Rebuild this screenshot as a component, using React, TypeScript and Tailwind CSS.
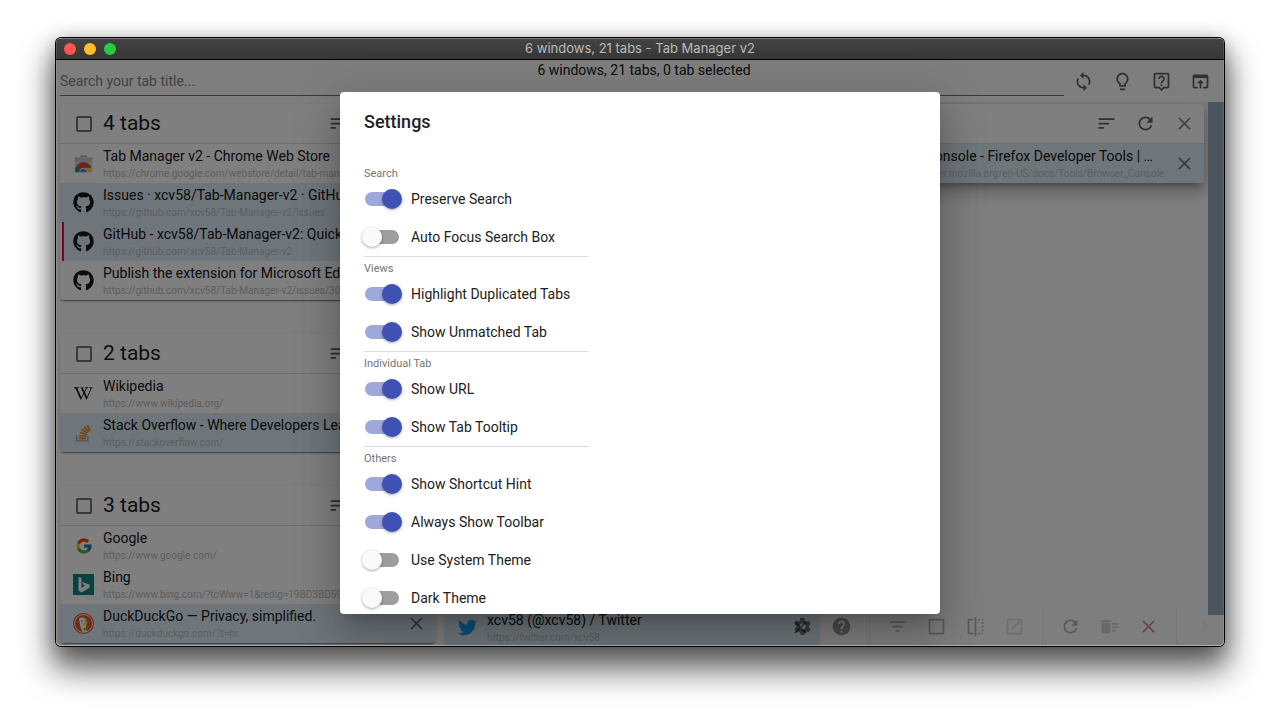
import { useState, type ReactNode } from "react";
import type { IconType } from "react-icons";
import {
  MdCheckBoxOutlineBlank,
  MdChevronRight,
  MdClose,
  MdDeleteSweep,
  MdFilterList,
  MdFlip,
  MdHelp,
  MdLightbulbOutline,
  MdOpenInBrowser,
  MdOpenInNew,
  MdOutlineLiveHelp,
  MdRefresh,
  MdSettings,
  MdSort,
  MdSync,
} from "react-icons/md";
import { FaGithub, FaTwitter, FaWikipediaW } from "react-icons/fa";
import { FcGoogle } from "react-icons/fc";

type Tab = {
  title: string;
  url: string;
  icon?: ReactNode;
  highlighted?: boolean;
  active?: boolean;
};

function ChromeStoreIcon() {
  return (
    <svg viewBox="0 0 24 24" className="size-[21px]" aria-hidden="true">
      <path d="M9 5V3.6h6V5" fill="none" stroke="#999" strokeWidth="1.4" />
      <path d="M2 5h20v15.500H2z" fill="#d4d4d4" />
      <path d="M2 5h20v5H2z" fill="#c6c6c6" />
      <path d="M2.500 22a9.500 9.500 0 0 1 1.800-7.500L9 22z" fill="#0f9d58" />
      <path d="M21.500 22a9.500 9.500 0 0 0-.8-5.500H13l2 5.500z" fill="#ffcd40" />
      <path d="M4 14.800a9.500 9.500 0 0 1 16.800 2H12a4.500 4.500 0 0 0-4.300 3z" fill="#db4437" />
      <path d="M7.300 22a4.700 4.700 0 0 1 9.400 0z" fill="#f1f1f1" />
      <path d="M8.300 22a3.700 3.700 0 0 1 7.400 0z" fill="#4285f4" />
    </svg>
  );
}

function StackOverflowIcon() {
  return (
    <svg viewBox="0 0 24 24" className="size-[21px]" aria-hidden="true" fill="none">
      <path d="M4 15.500v6h13v-6" stroke="#a6a6a6" strokeWidth="1.500" />
      <g stroke="#f48023" strokeWidth="1.900">
        <path d="M6.500 18.800h8.500" />
        <path d="M6.700 15.400l8.400.9" />
        <path d="M7.800 11.700l8 2.500" />
        <path d="M9.800 8.200l7 4.300" />
        <path d="M12.900 5.200l5.300 6.100" />
        <path d="M16.500 3.200l3 7" />
      </g>
    </svg>
  );
}

function BingIcon() {
  return (
    <svg viewBox="0 0 21 21" className="size-[21px]" aria-hidden="true">
      <path d="M0 0h21v21H0z" fill="#0c8484" />
      <path d="M5.500 3l3 1v9.800l3.600-2.100-1.800-.9-1.200-2.900 7.400 2.600v3.300L8.500 18.500l-3-1.700z" fill="#fff" />
    </svg>
  );
}

function DuckIcon() {
  return (
    <svg viewBox="0 0 24 24" className="size-[21px]" aria-hidden="true">
      <circle cx="12" cy="12" r="12" fill="#de5833" />
      <circle cx="12" cy="12" r="10.200" fill="none" stroke="#fff" strokeWidth="1" />
      <path d="M10.500 21.500c-.8-3-2.600-6.600-2.600-9.300 0-2-1.600-4.200-.7-6 1.200-1.300 3.600-1.400 5.300-.8 2.300.8 3.400 2.800 3.200 5.200l-.8 5.400 1.300 5.200c-2 .7-3.800.9-5.700.3z" fill="#fff" />
      <path d="M12.300 11.300c1.800-1 4.500-1 5.600-.5-1 .9-2.800 1.200-4 1.700 1 .7 2.300.5 2.700 1.100-1 .8-4.600.7-4.900-1z" fill="#fdd20a" />
      <path d="M12.200 16.500l2.300 1 2.400-1.200v4l-2.400-.8-2.300.9z" fill="#65bc46" />
      <circle cx="10.300" cy="9" r=".8" fill="#2d4f8e" />
      <circle cx="14" cy="8.600" r=".7" fill="#2d4f8e" />
    </svg>
  );
}

const github = <FaGithub className="size-[21px] text-[#191717]" />;

const windows: Tab[][] = [
  [
    {
      title: "Tab Manager v2 - Chrome Web Store",
      url: "https://chrome.google.com/webstore/detail/tab-manager-v2",
      icon: <ChromeStoreIcon />,
    },
    {
      title: "Issues · xcv58/Tab-Manager-v2 · GitHub",
      url: "https://github.com/xcv58/Tab-Manager-v2/issues",
      icon: github,
      highlighted: true,
    },
    {
      title: "GitHub - xcv58/Tab-Manager-v2: Quick",
      url: "https://github.com/xcv58/Tab-Manager-v2",
      icon: github,
      highlighted: true,
      active: true,
    },
    {
      title: "Publish the extension for Microsoft Edge",
      url: "https://github.com/xcv58/Tab-Manager-v2/issues/302",
      icon: github,
    },
  ],
  [
    {
      title: "Wikipedia",
      url: "https://www.wikipedia.org/",
      icon: <FaWikipediaW className="size-[19px] text-black" />,
    },
    {
      title: "Stack Overflow - Where Developers Learn",
      url: "https://stackoverflow.com/",
      icon: <StackOverflowIcon />,
      highlighted: true,
    },
  ],
  [
    { title: "Google", url: "https://www.google.com/", icon: <FcGoogle className="size-[18px]" /> },
    { title: "Bing", url: "https://www.bing.com/?toWww=1&redig=19BD3BD593", icon: <BingIcon /> },
    {
      title: "DuckDuckGo — Privacy, simplified.",
      url: "https://duckduckgo.com/?t=hr",
      icon: <DuckIcon />,
      highlighted: true,
    },
  ],
];

const twitterTab: Tab = {
  title: "xcv58 (@xcv58) / Twitter",
  url: "https://twitter.com/xcv58",
  icon: <FaTwitter className="size-[19px] text-[#1da1f2]" />,
  highlighted: true,
};

const consoleTab: Tab = {
  title: "Browser Console - Firefox Developer Tools | …",
  url: "https://developer.mozilla.org/en-US/docs/Tools/Browser_Console",
  highlighted: true,
};

function IconButton({ icon: Icon, label, tone }: { icon: IconType; label: string; tone: string }) {
  return (
    <button
      type="button"
      aria-label={label}
      className={`flex h-[39px] w-[39px] shrink-0 items-center justify-center ${tone}`}
    >
      <Icon className="size-[21px]" />
    </button>
  );
}

function TabRow({ tab }: { tab: Tab }) {
  return (
    <li
      className={`flex h-[39px] items-center ${tab.highlighted ? "bg-[#deedf6]" : ""} ${
        tab.active ? "ml-0.5 border-l-2 border-[#f50057] pl-[9px]" : "pl-[13px]"
      }`}
    >
      <span className="flex w-[21px] shrink-0 justify-center">{tab.icon}</span>
      <a href={tab.url} className="ml-[9px] h-full min-w-0 flex-1 whitespace-nowrap">
        <span className="block text-[14px] leading-6 text-[#141414]">{tab.title}</span>
        <span className="block text-[10px] leading-[12px] text-[#bdbdbd]">{tab.url}</span>
      </a>
      <IconButton icon={MdClose} label={`Close ${tab.title}`} tone="text-[#757575]" />
    </li>
  );
}

function WindowCard({ tabs, raised }: { tabs: Tab[]; raised?: boolean }) {
  const label = `${tabs.length} ${tabs.length === 1 ? "tab" : "tabs"}`;
  return (
    <section
      className={`overflow-hidden rounded-[4px] bg-white ${
        raised
          ? "shadow-[0_5px_6px_-3px_rgba(0,0,0,0.3),0_6px_16px_4px_rgba(0,0,0,0.24)]"
          : "shadow-[0_2px_1px_-1px_rgba(0,0,0,0.4),0_1px_3px_rgba(0,0,0,0.2)]"
      }`}
    >
      <div className="flex h-10 items-center border-b border-[#dcdcdc] pl-4">
        <label className="flex flex-1 items-center gap-[11px]">
          <input
            type="checkbox"
            className="size-4 appearance-none rounded-[2px] border-2 border-[#757575]"
          />
          <span className="pb-0.5 text-[21px] leading-6 text-[#1c1c1c]">{label}</span>
        </label>
        <IconButton icon={MdSort} label="Sort tabs" tone="text-[#606060]" />
        <IconButton icon={MdRefresh} label="Reload all tabs" tone="text-[#606060]" />
        <IconButton icon={MdClose} label="Close window" tone="text-[#858585]" />
      </div>
      <ul>
        {tabs.map((tab) => (
          <TabRow key={tab.url} tab={tab} />
        ))}
      </ul>
    </section>
  );
}

function Divider() {
  return <span className="mx-2 h-full w-px bg-[#ececec]" />;
}

function Toolbar() {
  return (
    <div className="absolute right-0 bottom-0 flex h-[39px] items-center">
      <IconButton icon={MdSettings} label="Settings" tone="text-black/50" />
      <IconButton icon={MdHelp} label="Shortcut help" tone="text-[#969696]" />
      <Divider />
      <IconButton icon={MdFilterList} label="Filter" tone="text-[#b4b4b4]" />
      <IconButton icon={MdCheckBoxOutlineBlank} label="Select all" tone="text-[#b4b4b4]" />
      <IconButton icon={MdFlip} label="Invert selection" tone="text-[#b4b4b4]" />
      <IconButton icon={MdOpenInNew} label="Open in new window" tone="text-[#dcdcdc]" />
      <Divider />
      <IconButton icon={MdRefresh} label="Reload" tone="text-[#b4b4b4]" />
      <IconButton icon={MdDeleteSweep} label="Remove duplicates" tone="text-[#d0d0d0]" />
      <IconButton icon={MdClose} label="Close selected" tone="text-[#f0789c]" />
      <Divider />
      <IconButton icon={MdChevronRight} label="Hide toolbar" tone="text-[#f3f3f3]" />
    </div>
  );
}

const groups: { name: string; items: [string, boolean][] }[] = [
  { name: "Search", items: [["Preserve Search", true], ["Auto Focus Search Box", false]] },
  { name: "Views", items: [["Highlight Duplicated Tabs", true], ["Show Unmatched Tab", true]] },
  { name: "Individual Tab", items: [["Show URL", true], ["Show Tab Tooltip", true]] },
  {
    name: "Others",
    items: [
      ["Show Shortcut Hint", true],
      ["Always Show Toolbar", true],
      ["Use System Theme", false],
      ["Dark Theme", false],
    ],
  },
];

function Switch({ label, initial }: { label: string; initial: boolean }) {
  const [on, setOn] = useState(initial);
  return (
    <label className="flex h-[38px] items-center gap-3 pl-px text-[14px] text-[#212121]">
      <input
        type="checkbox"
        checked={on}
        onChange={(e) => setOn(e.target.checked)}
        className="relative h-[14px] w-[34px] appearance-none rounded-full bg-[#9e9e9e] before:absolute before:-top-[3px] before:-left-[3px] before:size-5 before:rounded-full before:bg-[#fafafa] before:shadow-[0_1px_3px_rgba(0,0,0,0.35)] checked:bg-[#9fa8da] checked:before:left-[17px] checked:before:bg-[#3f51b5]"
      />
      {label}
    </label>
  );
}

function SettingsDialog() {
  return (
    <div className="absolute inset-0 flex items-center justify-center bg-black/50 py-8">
      <div
        role="dialog"
        aria-modal="true"
        aria-labelledby="settings-title"
        className="h-full w-[600px] max-w-full overflow-hidden rounded-[4px] bg-white px-6 pt-4 shadow-[0_11px_15px_-7px_rgba(0,0,0,0.2),0_24px_38px_3px_rgba(0,0,0,0.14),0_9px_46px_8px_rgba(0,0,0,0.12)]"
      >
        <h2 id="settings-title" className="mb-[25px] text-[18px] leading-7 font-medium text-[#212121]">
          Settings
        </h2>
        <div className="w-[225px]">
          {groups.map((group) => (
            <div
              key={group.name}
              role="group"
              aria-label={group.name}
              className="border-t border-[#dcdcdc] first:border-transparent"
            >
              <h3 className="pt-1.5 text-[11px] leading-[12px] text-[#757575]">{group.name}</h3>
              {group.items.map(([label, initial]) => (
                <Switch key={label} label={label} initial={initial} />
              ))}
            </div>
          ))}
        </div>
      </div>
    </div>
  );
}

export default function App() {
  return (
    <div className="flex h-screen flex-col bg-white px-14 pt-[38px] pb-[74px] font-['Roboto',sans-serif]">
      <main className="relative flex min-h-0 flex-1 flex-col overflow-hidden rounded-[5px] shadow-[0_0_0_1px_#000,0_20px_32px_4px_rgba(0,0,0,0.6),0_4px_20px_rgba(0,0,0,0.3)] after:pointer-events-none after:absolute after:inset-0 after:rounded-[5px] after:shadow-[inset_0_-1px_0_rgba(255,255,255,0.3),inset_0_0_0_1px_rgba(255,255,255,0.12)]">
        <header className="relative flex h-[22px] shrink-0 items-center justify-center border-t border-b border-t-[#6a6c6b] border-b-black bg-linear-to-b from-[#424443] to-[#363837]">
          <div className="absolute left-2 flex gap-2">
            <button type="button" aria-label="Close" className="size-3 rounded-full bg-[#ff5650]" />
            <button type="button" aria-label="Minimize" className="size-3 rounded-full bg-[#ffbd2e]" />
            <button type="button" aria-label="Zoom" className="size-3 rounded-full bg-[#28cb42]" />
          </div>
          <h1 className="font-['Inter',sans-serif] text-[13px] text-[#b8baba]">
            6 windows, 21 tabs - Tab Manager v2
          </h1>
        </header>

        <div className="relative flex min-h-0 flex-1 flex-col bg-[#fdfdfd]">
          <p className="absolute inset-x-0 top-0 ml-2 text-center text-[14px] leading-5 text-[#141414]">
            6 windows, 21 tabs, 0 tab selected
          </p>
          <div className="flex h-[42px] shrink-0 items-center pr-1 pl-1">
            <input
              type="text"
              aria-label="Search your tab title"
              placeholder="Search your tab title..."
              className="mb-1.5 h-[30px] flex-1 self-end border-b border-[#707070] bg-transparent text-[14px] outline-none placeholder:text-[#858585]"
            />
            <IconButton icon={MdSync} label="Sync" tone="text-[#606060]" />
            <IconButton icon={MdLightbulbOutline} label="Toggle theme" tone="text-[#606060]" />
            <IconButton icon={MdOutlineLiveHelp} label="Help" tone="text-[#606060]" />
            <IconButton icon={MdOpenInBrowser} label="Open in tab" tone="text-[#606060]" />
          </div>

          <div className="flex min-h-0 flex-1">
            <div className="grid min-w-0 flex-1 grid-cols-3 gap-2 overflow-hidden pt-0.5 pr-1 pl-1">
              <div className="flex min-w-0 flex-col gap-[34px]">
                {windows.map((tabs) => (
                  <WindowCard key={tabs[0].url} tabs={tabs} />
                ))}
              </div>
              <ul className="-mb-px flex min-w-0 flex-col justify-end">
                <TabRow tab={twitterTab} />
              </ul>
              <div className="min-w-0">
                <WindowCard tabs={[consoleTab]} raised />
              </div>
            </div>
            <div className="mb-[31px] w-4 shrink-0 bg-[#96aaba]" />
          </div>

          <Toolbar />
          <SettingsDialog />
        </div>
      </main>
    </div>
  );
}
